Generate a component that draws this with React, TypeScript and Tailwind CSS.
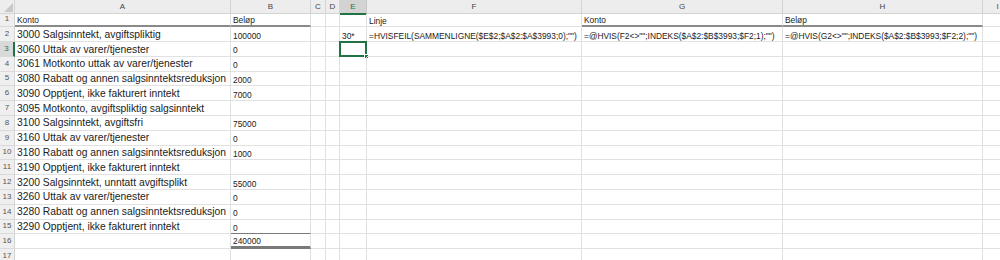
import React from "react";

const COLS = [
  { key: "A", w: 216 },
  { key: "B", w: 80 },
  { key: "C", w: 15 },
  { key: "D", w: 14 },
  { key: "E", w: 27 },
  { key: "F", w: 215 },
  { key: "G", w: 201 },
  { key: "H", w: 200 },
  { key: "I", w: 30 },
];

type Row = {
  a?: string;
  b?: string;
  e?: string;
  f?: string;
  g?: string;
  h?: string;
  big?: boolean;
};

const rows: Row[] = [
  { a: "Konto", b: "Beløp", f: "Linje", g: "Konto", h: "Beløp" },
  {
    a: "3000 Salgsinntekt, avgiftspliktig",
    b: "100000",
    e: "30*",
    f: '=HVISFEIL(SAMMENLIGNE($E$2;$A$2:$A$3993;0);"")',
    g: '=@HVIS(F2<>"";INDEKS($A$2:$B$3993;$F2;1);"")',
    h: '=@HVIS(G2<>"";INDEKS($A$2:$B$3993;$F2;2);"")',
    big: true,
  },
  { a: "3060 Uttak av varer/tjenester", b: "0", big: true },
  { a: "3061 Motkonto uttak av varer/tjenester", b: "0", big: true },
  { a: "3080 Rabatt og annen salgsinntektsreduksjon", b: "2000", big: true },
  { a: "3090 Opptjent, ikke fakturert inntekt", b: "7000", big: true },
  { a: "3095 Motkonto, avgiftspliktig salgsinntekt", big: true },
  { a: "3100 Salgsinntekt, avgiftsfri", b: "75000", big: true },
  { a: "3160 Uttak av varer/tjenester", b: "0", big: true },
  { a: "3180 Rabatt og annen salgsinntektsreduksjon", b: "1000", big: true },
  { a: "3190 Opptjent, ikke fakturert inntekt", big: true },
  { a: "3200 Salgsinntekt, unntatt avgiftsplikt", b: "55000", big: true },
  { a: "3260 Uttak av varer/tjenester", b: "0", big: true },
  { a: "3280 Rabatt og annen salgsinntektsreduksjon", b: "0", big: true },
  { a: "3290 Opptjent, ikke fakturert inntekt", b: "0", big: true },
  { b: "240000" },
  {},
];

const rowHeights = [13, 15, 14.8, 14.8, 14.8, 14.8, 14.8, 14.8, 14.8, 14.8, 14.8, 14.8, 14.8, 14.8, 14.8, 14.8, 14.8];

const font = { fontFamily: '"Liberation Sans", Arial, sans-serif' };

export default function App() {
  return (
    <div className="w-[1000px] h-[260px] overflow-hidden bg-white text-[#222]" style={font}>
      {/* Column header row */}
      <div className="flex h-[14px] bg-[#ededed] border-b border-[#d4d4d4]">
        <div className="w-[15px] shrink-0 relative border-r border-[#d4d4d4]">
          <svg className="absolute right-[1px] bottom-[1px]" width="9" height="9" viewBox="0 0 9 9">
            <polygon points="9,0 9,9 0,9" fill="#c8c8c8" />
          </svg>
        </div>
        {COLS.map((c) =>
          c.key === "E" ? (
            <div
              key={c.key}
              className="shrink-0 flex items-center justify-center bg-[#d3d3d3] text-[#217346] text-[8px] border-r border-[#c6c6c6] border-b-2 border-b-[#217346] h-[15px]"
              style={{ width: c.w }}
            >
              {c.key}
            </div>
          ) : (
            <div
              key={c.key}
              className="shrink-0 flex items-center justify-center text-[8px] text-[#444] border-r border-[#d4d4d4]"
              style={{ width: c.w }}
            >
              {c.key}
            </div>
          )
        )}
      </div>
      {rows.map((r, i) => {
        const n = i + 1;
        const h = rowHeights[i];
        const selRow = n === 3;
        return (
          <div key={n} className="flex" style={{ height: h }}>
            <div
              className={
                "w-[15px] shrink-0 flex items-end justify-center pb-[1px] text-[8px] border-b border-[#dadada] " +
                (selRow
                  ? "bg-[#d9d9d9] text-[#217346] border-r-2 border-r-[#217346]"
                  : "bg-[#efefef] text-[#555] border-r border-r-[#d4d4d4]")
              }
            >
              {n}
            </div>
            {COLS.map((c) => {
              let content: string | undefined;
              let extra = "";
              let textCls = "text-[8.4px]";
              if (c.key === "A") {
                content = r.a;
                if (r.big) textCls = "text-[10.3px]";
                if (n === 1) extra = "border-b-2 border-b-[#8a8a8a]";
              }
              if (c.key === "B") {
                content = r.b;
                if (n === 1) extra = "border-b-2 border-b-[#8a8a8a]";
                if (n === 15) extra = "border-b border-b-[#7a7a7a]";
                if (n === 16) extra = "border-b-[3px] border-b-[#7a7a7a]";
              }
              if (c.key === "E") content = r.e;
              if (c.key === "F") content = r.f;
              if (c.key === "G") {
                content = r.g;
                if (n === 1) extra = "border-b-2 border-b-[#8a8a8a]";
              }
              if (c.key === "H") {
                content = r.h;
                if (n === 1) extra = "border-b-2 border-b-[#8a8a8a]";
              }
              const active = c.key === "E" && n === 3;
              return (
                <div
                  key={c.key}
                  className={
                    "shrink-0 relative flex items-end pl-[2px] pb-[1px] whitespace-nowrap overflow-visible border-r border-b border-[#e1e1e1] leading-none " +
                    textCls +
                    " " +
                    extra
                  }
                  style={{ width: c.w }}
                >
                  {content}
                  {active && (
                    <div className="absolute left-[-1px] top-[-1px] right-[-1px] bottom-[-1px] border-2 border-[#217346]">
                      <div className="absolute right-[-4px] bottom-[-4px] w-[5px] h-[5px] bg-[#217346] border border-white" />
                    </div>
                  )}
                </div>
              );
            })}
          </div>
        );
      })}
    </div>
  );
}
